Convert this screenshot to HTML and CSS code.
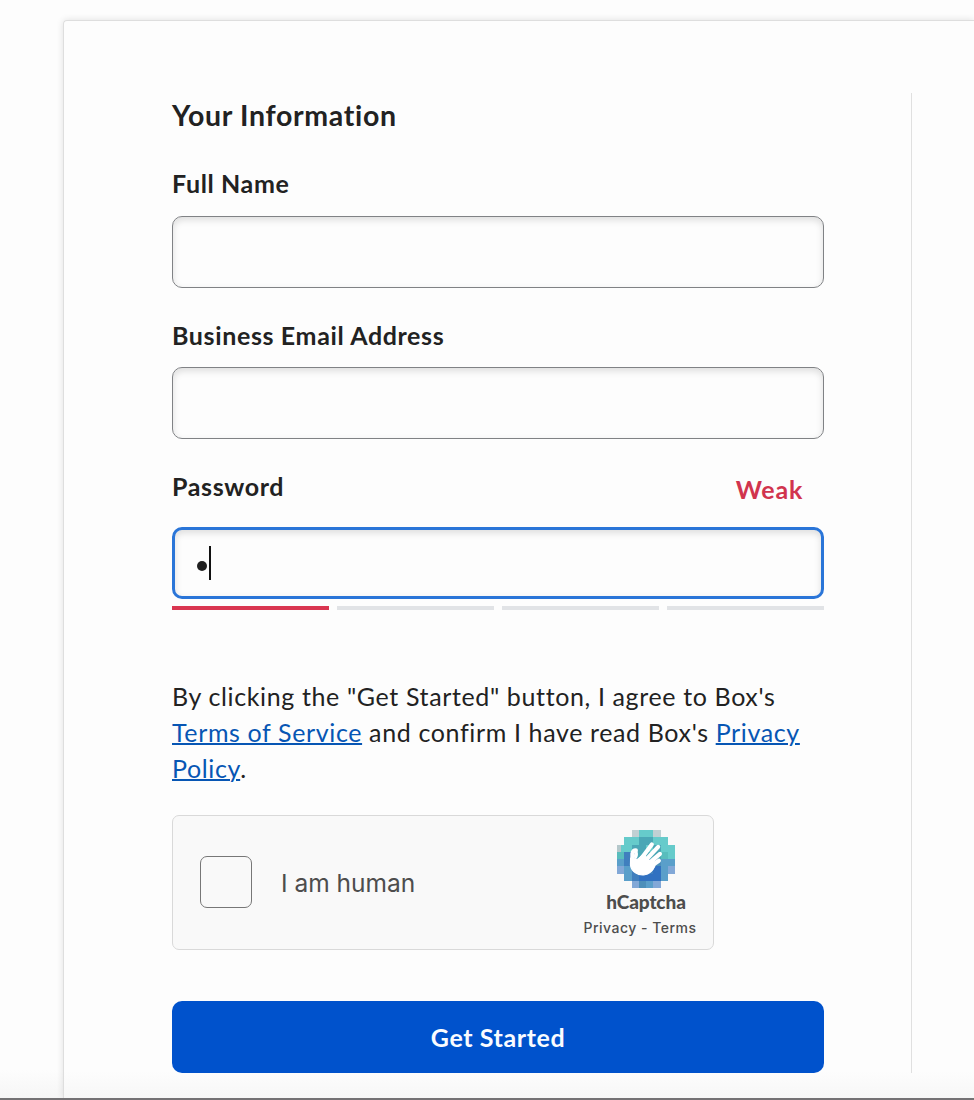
FILE: index.html
```html
<!DOCTYPE html>
<html lang="en">
<head>
<meta charset="utf-8">
<title>Sign up</title>
<link rel="stylesheet" href="styles.css">
</head>
<body>
<main class="card">
  <form class="form">
    <h1 class="title">Your Information</h1>
    <label class="label first" for="name">Full Name</label>
    <input class="field" id="name" type="text">
    <label class="label" for="email">Business Email Address</label>
    <input class="field" id="email" type="text">
    <div class="password-head"><label class="label" for="pw">Password</label><span class="strength">Weak</span></div>
    <div class="field focused" id="pw"><span class="dot"></span><span class="caret"></span></div>
    <div class="meter"><span class="bar on"></span><span class="bar"></span><span class="bar"></span><span class="bar"></span></div>
    <p class="terms">By clicking the "Get Started" button, I agree to Box's<br><a href="#">Terms of Service</a> and confirm I have read Box's <a href="#">Privacy<br>Policy</a>.</p>
    <div class="captcha">
      <span class="check"></span>
      <span class="human">I am human</span>
      <div class="brand">
        <svg class="logo" viewBox="0 0 32 32" shape-rendering="crispEdges">
          <path fill="#c0d0d3" d="M8 0h4v4H8zM20 0h4v4h-4z"/>
          <path fill="#66cbcb" d="M12 0h8v4h8v4h4v8h-4v4h-4v-4H0V8h4V4h8z"/>
          <path fill="#59bdbd" d="M4 12h4v8H4zM24 12h4v4h-4zM0 12h4v4H0z"/>
          <path fill="#b5c8cb" d="M0 8h2v4H0z"/>
          <path fill="#4ba7b6" d="M12 4h8v4h-8zM8 8h8v4H8zM20 8h4v8h-4z"/>
          <path fill="#5a9fca" d="M0 16h4v4H0zM4 20h4v8H4zM24 16h8v4h-4v8h-4zM12 28h8v4h-8z"/>
          <path fill="#407fbe" d="M4 12h4v8H4zM8 12h16v16H8z"/>
          <path fill="#4ba7b6" d="M11 12h13v4H11z"/>
          <path fill="#3171c1" d="M12 24h12v4H12zM20 20h4v4h-4z"/>
          <path fill="#82a8d7" d="M0 20h4v4H0zM28 20h4v4h-4zM8 28h4v4H8zM20 28h4v4h-4z"/>
          <path fill="#4c8fba" d="M12 28h4v4h-4zM20 16h4v4h-4z"/>
          <g shape-rendering="geometricPrecision" fill="#fff" stroke="#fff" stroke-linecap="round" stroke-linejoin="round">
            <path stroke-width=".6" d="M7.5 15.5L11.3 16.2L14.5 13.5L21 19.8C20 22 18.6 24.2 15.4 24.7C11.4 25.3 8 23 7.4 19.4z"/>
            <path fill="none" stroke-width="2.3" d="M8.5 18V13.2Q8.8 11.2 10.4 11.2M12.5 17L19.2 8M15 17.5L22.7 9.3M17 18.8L23.7 13.2M18.5 20.2L23.1 17"/>
            <path stroke-width="1" d="M10 15.5Q11.6 14.8 10.8 11.5L9.8 14z"/>
          </g>
        </svg>
        <strong class="brand-name">hCaptcha</strong>
        <span class="links">Privacy - Terms</span>
      </div>
    </div>
    <button class="submit" type="button">Get Started</button>
  </form>
  <div class="divider"></div>
</main>
</body>
</html>
```
FILE: styles.css
```css
* { box-sizing: border-box; }
body {
  margin: 0;
  height: 1100px;
  overflow: hidden;
  padding: 20px 0 0 63px;
  background: linear-gradient(#fdfdfd 1070px, #f6f6f6 1098px, #747274 1098px);
  font-family: Lato, sans-serif;
  color: #222;
}
.card {
  display: flex;
  gap: 87px;
  height: 1078px;
  padding: 72px 0 0 108px;
  border: 1px solid #dedede;
  border-width: 1px 0 0 1px;
  border-radius: 4px 0 0 0;
  box-shadow: 0 0 7px rgba(0, 0, 0, .12);
  background: linear-gradient(#fdfdfd 1050px, #f7f7f7);
  clip-path: inset(-20px 0 0 -20px);
}
.form { display: flex; flex-direction: column; width: 652px; }
.divider { width: 1px; height: 980px; background: #e0e0e0; }
.title { margin: 3px 0 31px; font-size: 28.5px; line-height: 38px; letter-spacing: .67px; }
.label { height: 36px; font-size: 25px; font-weight: 700; line-height: 36px; letter-spacing: .63px; margin-bottom: 14px; }
.label.first { margin-bottom: 15px; }
.field {
  width: 652px;
  height: 72px;
  flex: none;
  margin: 0 0 29px;
  border: 1px solid #808285;
  border-radius: 10px;
  background: #fdfdfd;
  box-shadow: inset 0 3px 7px rgba(0, 0, 0, .13);
}
.password-head { display: flex; justify-content: space-between; height: 59px; padding-right: 21px; }
.strength { font-size: 25px; font-weight: 700; line-height: 42px; letter-spacing: .75px; color: #d1344e; }
.focused { display: flex; align-items: center; border: 3px solid #2a75d8; padding-left: 22px; margin-bottom: 7px; }
.dot { width: 10px; height: 10px; border-radius: 50%; background: #202020; margin-top: 5px; }
.caret { width: 2px; height: 34px; margin-left: 2px; background: #111; }
.meter { display: flex; gap: 8.5px; }
.bar { flex: 1; height: 4px; background: #e1e3e6; }
.on { background: #d93550; }
.terms { margin: 68px 0 29px; font-size: 25px; line-height: 36px; letter-spacing: .63px; white-space: nowrap; }
.terms a { color: #0756b4; text-decoration-thickness: 2px; }
.captcha {
  display: flex;
  align-items: center;
  width: 542px;
  height: 135px;
  padding-left: 27px;
  border: 1px solid #d9d9d9;
  border-radius: 7px;
  background: #f9f9f9;
  color: #4d4d4d;
}
.check { width: 52px; height: 52px; margin-bottom: 1px; border: 1px solid #777; border-radius: 7px; }
.human { margin-left: 29px; font-family: Inter, sans-serif; font-size: 24.5px; }
.brand { display: flex; flex-direction: column; align-items: center; width: 124px; margin: 3px 5px 0 auto; }
.logo { width: 58px; height: 58px; }
.brand-name { font-size: 19px; font-weight: 900; line-height: 28px; letter-spacing: -.1px; }
.links { margin: 1px 12px 0 0; font-family: Inter, sans-serif; font-size: 14px; font-weight: 500; line-height: 22px; letter-spacing: .5px; white-space: nowrap; }
.submit {
  width: 652px;
  height: 72px;
  margin: 51px 0 0;
  border: 0;
  border-radius: 10px;
  background: #0052cc;
  color: #fafcff;
  font: 700 25px/36px Lato, sans-serif;
  letter-spacing: .6px;
}
```
